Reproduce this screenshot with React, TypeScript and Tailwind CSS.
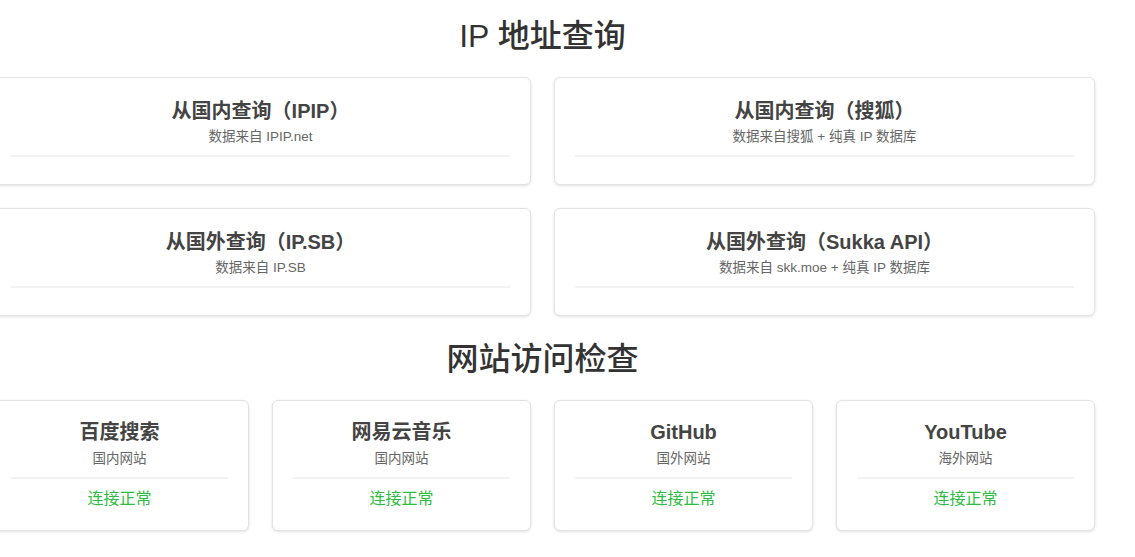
import React from "react";

const font = { fontFamily: '"Liberation Sans", "Noto Sans CJK SC", sans-serif' };

function IpCard({ title, sub }: { title: string; sub: string }) {
  return (
    <div className="h-[108px] rounded-md border border-[#e3e3e3] bg-white px-5 pt-[19px] shadow-[0_1px_3px_rgba(0,0,0,0.12)] text-center">
      <div className="text-[20px] leading-[28px] font-semibold text-[#444]">{title}</div>
      <div className="mt-[2px] text-[13.5px] leading-[20px] text-[#666]">{sub}</div>
      <div className="mt-[8px] border-t-2 border-[#f3f3f3]" />
    </div>
  );
}

function SiteCard({ title, sub }: { title: string; sub: string }) {
  return (
    <div className="h-[131px] rounded-md border border-[#e3e3e3] bg-white px-5 pt-[17px] shadow-[0_1px_3px_rgba(0,0,0,0.12)] text-center">
      <div className="text-[20px] leading-[28px] font-semibold text-[#444]">{title}</div>
      <div className="mt-[3px] text-[13.5px] leading-[20px] text-[#666]">{sub}</div>
      <div className="mt-[8px] border-t-2 border-[#f3f3f3]" />
      <div className="mt-[9px] text-[16px] leading-[22px] text-[#2bbd3f]">连接正常</div>
    </div>
  );
}

export default function App() {
  return (
    <div className="min-h-[557px] w-[1135px] overflow-hidden bg-white" style={font}>
      <div className="ml-[-10px] w-[1105px]">
        <h1 className="pt-[16px] pb-[21px] text-center text-[32px] leading-[40px] font-medium text-[#333]">IP 地址查询</h1>
        <div className="grid grid-cols-2 gap-[23px]">
          <IpCard title="从国内查询（IPIP）" sub="数据来自 IPIP.net" />
          <IpCard title="从国内查询（搜狐）" sub="数据来自搜狐 + 纯真 IP 数据库" />
          <IpCard title="从国外查询（IP.SB）" sub="数据来自 IP.SB" />
          <IpCard title="从国外查询（Sukka API）" sub="数据来自 skk.moe + 纯真 IP 数据库" />
        </div>
        <h1 className="pt-[23px] pb-[21px] text-center text-[32px] leading-[40px] font-medium text-[#333]">网站访问检查</h1>
        <div className="grid grid-cols-4 gap-[23px]">
          <SiteCard title="百度搜索" sub="国内网站" />
          <SiteCard title="网易云音乐" sub="国内网站" />
          <SiteCard title="GitHub" sub="国外网站" />
          <SiteCard title="YouTube" sub="海外网站" />
        </div>
      </div>
    </div>
  );
}
